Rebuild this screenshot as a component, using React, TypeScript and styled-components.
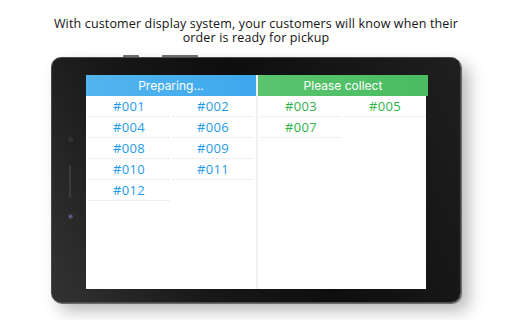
import styled, { createGlobalStyle } from "styled-components";

const GlobalStyle = createGlobalStyle`
  html, body {
    margin: 0;
    padding: 0;
    background: #ffffff;
  }
  body {
    width: 512px;
    height: 320px;
    overflow: hidden;
  }
`;

const Page = styled.div`
  display: flex;
  flex-direction: column;
  align-items: center;
  padding-top: 17px;
  width: 512px;
  height: 320px;
  box-sizing: border-box;
`;

const Caption = styled.p`
  margin: 0;
  width: 420px;
  font-family: "Open Sans", "Noto Sans", sans-serif;
  font-weight: 500;
  font-size: 12.5px;
  line-height: 14px;
  letter-spacing: 0.15px;
  color: #141414;
  text-align: center;
`;

const Tablet = styled.div`
  position: relative;
  margin-top: 12px;
  width: 410px;
  height: 246px;
  box-sizing: border-box;
  padding: 17px 34px 15px 34px;
  border-radius: 10px;
  border: 1px solid #4a4a4a;
  background: linear-gradient(65deg, #333 0%, #181818 30%, #0e0e0e 55%, #1f1f1f 100%);
  box-shadow: 1px 1px 0 #6a6a6a, 8px 8px 16px rgba(0, 0, 0, 0.28);
`;

const SideButton = styled.span<{ $left: number; $width: number }>`
  position: absolute;
  top: -3px;
  left: ${(p) => p.$left}px;
  width: ${(p) => p.$width}px;
  height: 2px;
  border-radius: 1px 1px 0 0;
  background: #6c6c6c;
`;

const Dot = styled.span<{ $top: number; $lens?: boolean }>`
  position: absolute;
  left: 16px;
  top: ${(p) => p.$top}px;
  width: 5px;
  height: 5px;
  border-radius: 50%;
  background: ${(p) => (p.$lens ? "radial-gradient(circle, #6b6a9c 0%, #3b3a4c 70%)" : "#333")};
`;

const Speaker = styled.span`
  position: absolute;
  left: 17px;
  top: 107px;
  width: 2px;
  height: 33px;
  border-radius: 1px;
  background: #3a3a3a;
`;

const Screen = styled.div`
  display: grid;
  grid-template-columns: 170px 2px 170px;
  height: 214px;
  background: #ffffff;
`;

const Divider = styled.div`
  background: #f1f1f1;
`;

const Panel = styled.section`
  display: flex;
  flex-direction: column;
`;

const PanelHeader = styled.div<{ $tone: "blue" | "green" }>`
  height: 21px;
  display: flex;
  align-items: center;
  justify-content: center;
  font-family: "Inter", "Liberation Sans", sans-serif;
  font-size: 12px;
  color: #ffffff;
  background: ${(p) =>
    p.$tone === "blue"
      ? "linear-gradient(90deg, #53b5ef, #3ea7ec)"
      : "linear-gradient(90deg, #5ac46e, #4abc62)"};
`;

const OrderGrid = styled.div`
  display: grid;
  grid-template-columns: 80px 80px;
  column-gap: 4px;
  padding: 0 3px;
`;

const Order = styled.div<{ $tone: "blue" | "green" }>`
  height: 20px;
  border-bottom: 1px dotted #e2e2e2;
  display: flex;
  align-items: center;
  justify-content: center;
  font-family: "Open Sans", "Noto Sans", sans-serif;
  font-weight: 500;
  font-size: 13px;
  letter-spacing: 0.3px;
  color: ${(p) => (p.$tone === "blue" ? "#1f9be8" : "#2fb24a")};
`;

const preparing = ["#001", "#002", "#004", "#006", "#008", "#009", "#010", "#011", "#012"];
const ready = ["#003", "#005", "#007"];

export default function App() {
  return (
    <>
      <GlobalStyle />
      <Page>
        <Caption>
          With customer display system, your customers will know when their order is ready for pickup
        </Caption>
        <Tablet>
          <SideButton $left={71} $width={16} />
          <SideButton $left={110} $width={36} />
          <Dot $top={79} />
          <Speaker />
          <Dot $top={156} $lens />
          <Screen>
            <Panel>
              <PanelHeader $tone="blue">Preparing...</PanelHeader>
              <OrderGrid>
                {preparing.map((n) => (
                  <Order key={n} $tone="blue">{n}</Order>
                ))}
              </OrderGrid>
            </Panel>
            <Divider />
            <Panel>
              <PanelHeader $tone="green">Please collect</PanelHeader>
              <OrderGrid>
                {ready.map((n) => (
                  <Order key={n} $tone="green">{n}</Order>
                ))}
              </OrderGrid>
            </Panel>
          </Screen>
        </Tablet>
      </Page>
    </>
  );
}
